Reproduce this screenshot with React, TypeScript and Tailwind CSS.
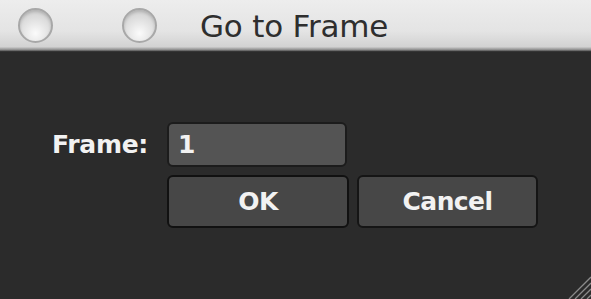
import React from "react";

export default function App() {
  return (
    <div className="relative w-[591px] h-[299px] overflow-hidden flex flex-col bg-[#2b2b2b] font-['DejaVu_Sans',sans-serif]">
      {/* Title bar */}
      <div className="h-[52px] shrink-0 flex items-center bg-[linear-gradient(#ededed,#e4e4e4_60%,#d2d2d2_90%,#8a8a8a_96%,#1a1a1a)] relative">
        <div className="ml-[18px] mt-[-1px] w-[35px] h-[35px] rounded-full border-2 border-[#a8a8a8] bg-[radial-gradient(circle_at_50%_75%,#fbfbfb,#dedede_55%,#c8c8c8)] shadow-[inset_0_2px_3px_rgba(0,0,0,0.15)]" />
        <div className="ml-[69px] mt-[-1px] w-[35px] h-[35px] rounded-full border-2 border-[#a8a8a8] bg-[radial-gradient(circle_at_50%_75%,#fbfbfb,#dedede_55%,#c8c8c8)] shadow-[inset_0_2px_3px_rgba(0,0,0,0.15)]" />
        <div className="ml-[43px] mt-[1px] text-[31px] leading-none text-[#2e2e2e] tracking-[-0.2px]">Go to Frame</div>
      </div>
      {/* Content */}
      <div className="flex flex-col pt-[70px]">
        <div className="flex items-center h-[45px]">
          <div className="w-[167px] pr-[19px] text-right font-bold text-[25px] leading-none text-[#f2f2f2] tracking-[-0.3px]">Frame:</div>
          <div className="w-[180px] h-[45px] rounded-[6px] border-2 border-[#1c1c1c] bg-[#545454] flex items-center pl-[9px] font-bold text-[25px] text-[#f2f2f2]">1</div>
        </div>
        <div className="flex mt-[8px] pl-[167px] gap-[8px]">
          <div className="w-[182px] h-[53px] rounded-[6px] border-2 border-[#111] bg-[#474747] flex items-center justify-center font-bold text-[25px] text-[#f2f2f2] tracking-[-0.6px]">OK</div>
          <div className="w-[181px] h-[53px] rounded-[6px] border-2 border-[#151515] bg-[#474747] flex items-center justify-center font-bold text-[25px] text-[#f2f2f2] tracking-[-0.6px]">Cancel</div>
        </div>
      </div>
      {/* Resize grip */}
      <svg className="absolute right-0 bottom-0" width="26" height="26" viewBox="0 0 26 26">
        <g stroke="#8a8a8a" strokeWidth="1.3">
          <line x1="26" y1="4" x2="4" y2="26" />
          <line x1="26" y1="10" x2="10" y2="26" />
          <line x1="26" y1="16" x2="16" y2="26" />
          <line x1="26" y1="22" x2="22" y2="26" />
        </g>
      </svg>
    </div>
  );
}
